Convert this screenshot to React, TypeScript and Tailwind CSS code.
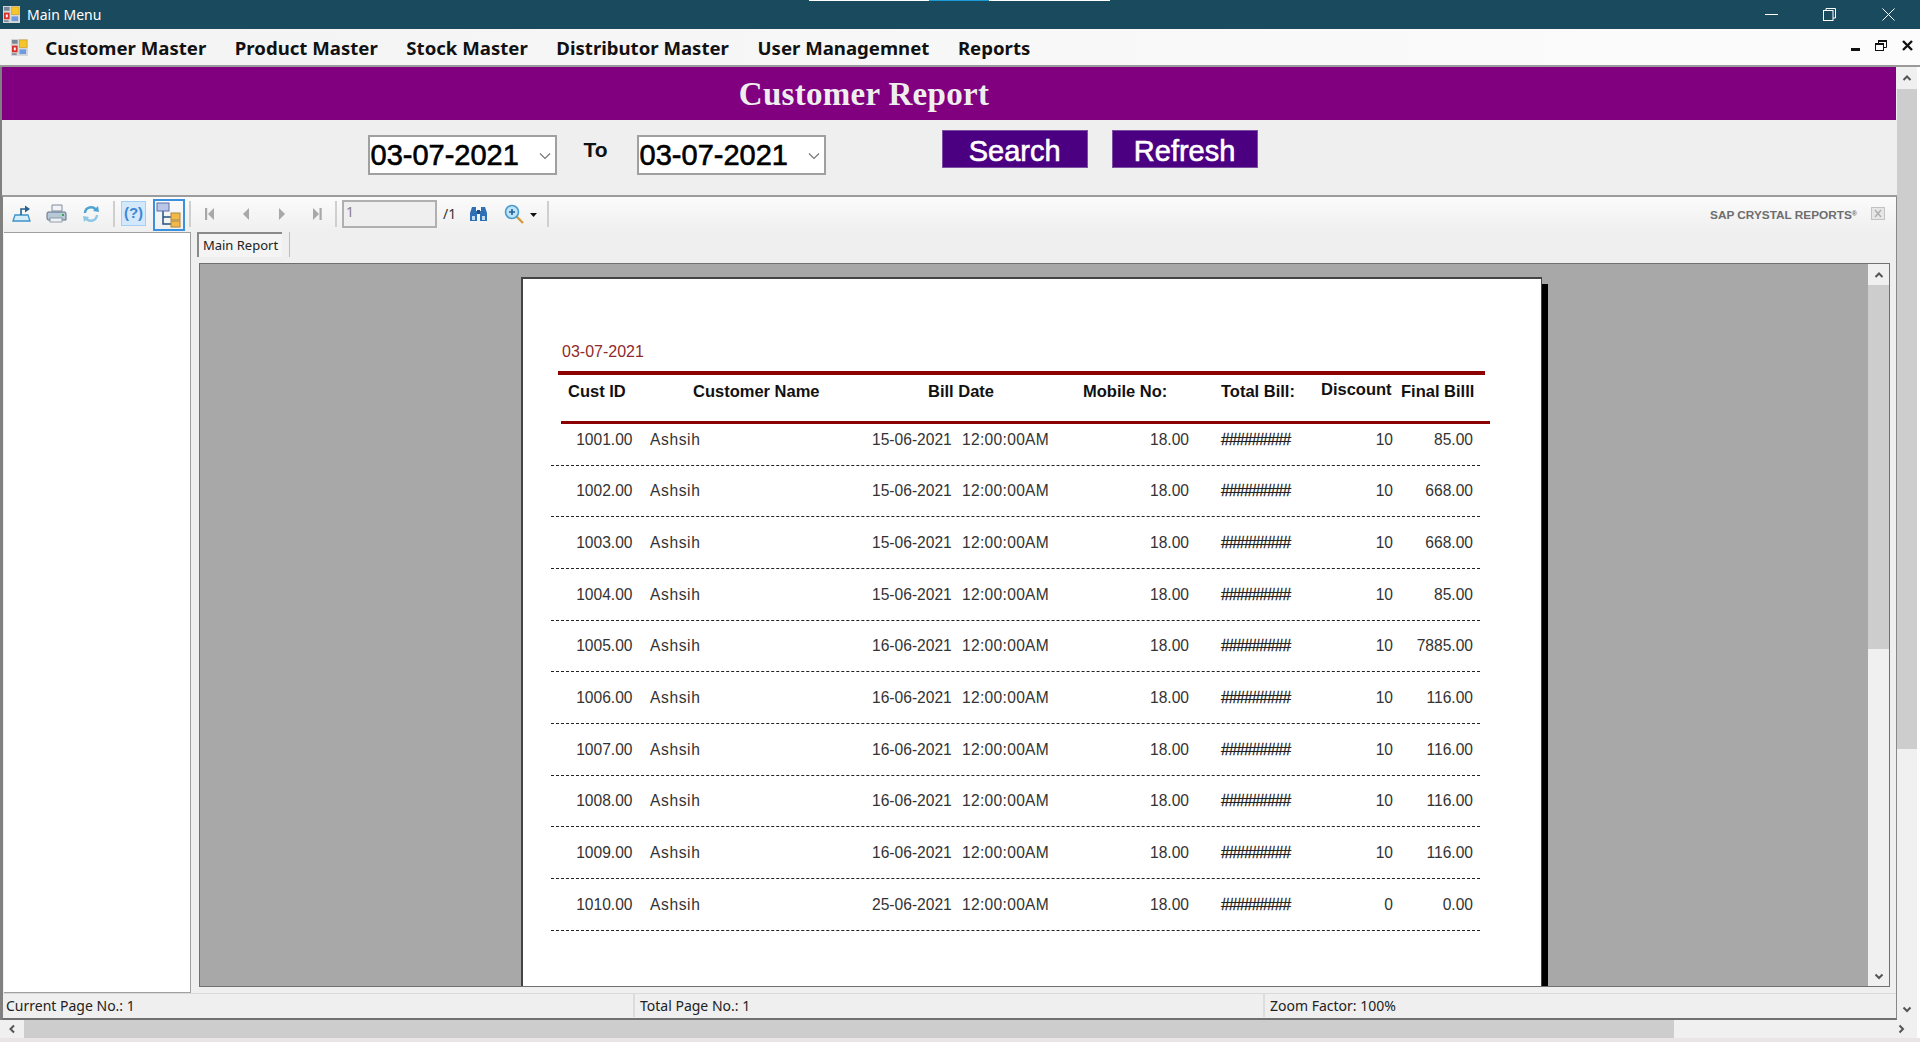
const rows = [
  { id: '1001.00', date: '15-06-2021', discount: '10', final: '85.00' },
  { id: '1002.00', date: '15-06-2021', discount: '10', final: '668.00' },
  { id: '1003.00', date: '15-06-2021', discount: '10', final: '668.00' },
  { id: '1004.00', date: '15-06-2021', discount: '10', final: '85.00' },
  { id: '1005.00', date: '16-06-2021', discount: '10', final: '7885.00' },
  { id: '1006.00', date: '16-06-2021', discount: '10', final: '116.00' },
  { id: '1007.00', date: '16-06-2021', discount: '10', final: '116.00' },
  { id: '1008.00', date: '16-06-2021', discount: '10', final: '116.00' },
  { id: '1009.00', date: '16-06-2021', discount: '10', final: '116.00' },
  { id: '1010.00', date: '25-06-2021', discount: '0', final: '0.00' },
]

const menus = ['Customer Master', 'Product Master', 'Stock Master', 'Distributor Master', 'User Managemnet', 'Reports']

function AppIcon({ size }: { size: number }) {
  return (
    <svg width={size} height={size} viewBox="0 0 18 18" className="shrink-0">
      <rect x="0" y="0" width="18" height="18" fill="#d8d8d8" />
      <rect x="1" y="1" width="6" height="4" fill="#7a8794" />
      <rect x="9" y="1" width="8" height="8" fill="#f5c52c" stroke="#c99a17" strokeWidth="0.6" />
      <rect x="1" y="7" width="6" height="7" fill="#d8312a" />
      <rect x="3" y="9" width="2" height="3" fill="#fff" />
      <rect x="9" y="11" width="7" height="5" fill="#6d9ae0" />
      <rect x="1" y="15" width="5" height="2" fill="#8794a0" />
    </svg>
  )
}

function Chevron({ dir, className }: { dir: 'up' | 'down' | 'left' | 'right'; className?: string }) {
  const d = {
    up: 'M1.5 7 L5 3.5 L8.5 7',
    down: 'M1.5 3.5 L5 7 L8.5 3.5',
    left: 'M7 1.5 L3.5 5 L7 8.5',
    right: 'M3.5 1.5 L7 5 L3.5 8.5',
  }[dir]
  return (
    <svg width="10" height="10" viewBox="0 0 10 10" className={className}>
      <path d={d} fill="none" stroke="#555" strokeWidth="2" />
    </svg>
  )
}

function DatePicker({ value }: { value: string }) {
  return (
    <div className="w-[189px] h-[40px] bg-white border-2 border-[#a0a0a0] flex items-center pl-[1px] font-['Liberation_Sans',sans-serif] text-[29px] text-black">
      <span className="mt-[1px] [-webkit-text-stroke:0.6px_black]">{value}</span>
      <svg width="12" height="8" viewBox="0 0 12 8" className="ml-[20px] mt-[2px]">
        <path d="M1 1.5 L6 6.5 L11 1.5" fill="none" stroke="#777" strokeWidth="1.2" />
      </svg>
    </div>
  )
}

function NavTriangle({ dir, bar }: { dir: 'left' | 'right'; bar?: boolean }) {
  const tri = dir === 'left' ? 'M9 2 L3 8 L9 14 Z' : 'M3 2 L9 8 L3 14 Z'
  return (
    <svg width="12" height="16" viewBox="0 0 12 16">
      {bar && <rect x={dir === 'left' ? 0 : 9.5} y="2" width="2.2" height="12" fill="#a8a8a8" />}
      <path d={tri} fill="#a8a8a8" />
    </svg>
  )
}

function Sep({ className }: { className: string }) {
  return <div className={`w-[2px] h-[26px] bg-[#cfcfcf] ${className}`} />
}

function Toolbar() {
  return (
    <div className="h-[35px] shrink-0 flex items-center pb-[2px] bg-gradient-to-b from-[#fbfbfb] to-[#efefef] font-['Noto_Sans',sans-serif]">
      {/* export */}
      <svg width="21" height="19" viewBox="0 0 21 19" className="ml-[8px]">
        <path d="M2 17 L4 11 H17 L19 17 Z" fill="#d6eefc" stroke="#3d93c9" strokeWidth="1.3" />
        <path d="M10 11 V5 H15" fill="none" stroke="#26618f" strokeWidth="1.6" />
        <path d="M14 1.5 L19 5 L14 8.5 Z" fill="#26618f" />
      </svg>
      {/* print */}
      <svg width="21" height="19" viewBox="0 0 21 19" className="ml-[14px]">
        <path d="M6 1 H16 V7 H6 Z" fill="#f1f3f6" stroke="#7e8c9c" />
        <path d="M2 8 H19 Q20 8 20 10 V16 H2 Q1 16 1 14 V10 Q1 8 2 8 Z" fill="#b7c8d8" stroke="#5b7186" />
        <rect x="4" y="14" width="12" height="4" fill="#eef2f6" stroke="#7e8c9c" strokeWidth="0.8" />
        <rect x="16" y="10" width="2" height="2" fill="#3aa655" />
      </svg>
      {/* refresh */}
      <svg width="18" height="18" viewBox="0 0 18 18" className="ml-[15px]">
        <path d="M3 8 A6 6 0 0 1 14 5" fill="none" stroke="#4ea5d4" strokeWidth="2.4" />
        <path d="M15 10 A6 6 0 0 1 4 13" fill="none" stroke="#8cc7e6" strokeWidth="2.4" />
        <path d="M11 6 L17 7 L16 1 Z" fill="#4ea5d4" />
        <path d="M7 12 L1 11 L2 17 Z" fill="#8cc7e6" />
      </svg>
      <Sep className="ml-[13px]" />
      <div className="ml-[6px] w-[25px] h-[25px] bg-[#d3e9fb] border border-[#a5cff2] flex items-center justify-center font-['Liberation_Sans',sans-serif] font-bold text-[15px] text-[#3f86d6]">
        (?)
      </div>
      <div className="ml-[7px] w-[32px] h-[32px] mt-[2px] border-2 border-[#3a90dc] flex items-center justify-center">
        <svg width="26" height="26" viewBox="0 0 26 26">
          <path d="M7 9 V22 H15 M7 15 H15" fill="none" stroke="#26507f" strokeWidth="1.5" />
          <rect x="1" y="1" width="12" height="8" fill="#b9c6e8" stroke="#5d6fa5" />
          <rect x="15" y="11" width="9" height="7" fill="#f4b84a" stroke="#a9883c" />
          <rect x="15" y="19" width="9" height="6" fill="#f4b84a" stroke="#a9883c" />
        </svg>
      </div>
      <Sep className="ml-[4px]" />
      <div className="ml-[14px]"><NavTriangle dir="left" bar /></div>
      <div className="ml-[23px]"><NavTriangle dir="left" /></div>
      <div className="ml-[24px]"><NavTriangle dir="right" /></div>
      <div className="ml-[22px]"><NavTriangle dir="right" bar /></div>
      <Sep className="ml-[13px]" />
      <div className="ml-[5px] w-[95px] h-[28px] bg-[#efefef] border-2 border-[#b0b0b0] pl-[2px] text-[14px] leading-[20px] text-[#8a7d8a]">1</div>
      <span className="ml-[6px] w-[14px] text-[14px] text-[#333]">/1</span>
      {/* binoculars */}
      <svg width="19" height="17" viewBox="0 0 19 17" className="ml-[12px]">
        <path d="M3 2 H7 V6 H8 V16 H1 V8 Z M12 2 H16 L18 8 V16 H11 V6 H12 Z" fill="#2f6fb5" />
        <rect x="8" y="5" width="3" height="4" fill="#1f4f86" />
        <rect x="3" y="11" width="3" height="4" fill="#bcdcf5" />
        <rect x="13" y="11" width="3" height="4" fill="#bcdcf5" />
      </svg>
      {/* zoom */}
      <svg width="21" height="20" viewBox="0 0 21 20" className="ml-[16px]">
        <path d="M12 12 L19 19" stroke="#d49a3a" strokeWidth="2.4" />
        <circle cx="8" cy="8" r="6.5" fill="#bfe3f7" stroke="#4a9bd0" strokeWidth="1.6" />
        <path d="M5 8 H11 M8 5 V11" stroke="#1f5f99" strokeWidth="1.6" />
      </svg>
      <svg width="7" height="4" viewBox="0 0 7 4" className="ml-[5px] mt-[3px]">
        <path d="M0 0 H7 L3.5 4 Z" fill="#111" />
      </svg>
      <Sep className="ml-[10px]" />
      <span className="ml-auto font-['Liberation_Sans',sans-serif] font-bold text-[11.8px] text-[#6d6d6d] mt-[5px]">
        SAP CRYSTAL REPORTS<sup className="text-[7px]">®</sup>
      </span>
      <svg width="14" height="13" viewBox="0 0 14 13" className="ml-[14px] mr-[11px] -mt-[1px]">
        <rect x="0.5" y="0.5" width="13" height="12" fill="#e6e6e6" stroke="#c2c2c2" />
        <path d="M4 3 L10 10 M10 3 L4 10" stroke="#aaa" strokeWidth="1.2" />
      </svg>
    </div>
  )
}

function ReportPage() {
  return (
    <div className="w-[1021px] h-[800px] shrink-0 bg-white border-l-2 border-t-2 border-r border-[#444] font-['Liberation_Sans',sans-serif] text-[15.6px] flex flex-col">
      <div className="ml-[39px] mt-[64px] h-[28px] text-[16px] leading-[18px] text-[#8f2a2a]">03-07-2021</div>
      <div className="ml-[35px] w-[927px] h-[4px] bg-[#8b0000]" />
      <div className="ml-[45px] h-[46px] pt-[7px] grid grid-cols-[125px_235px_155px_138px_100px_80px_auto] items-start font-bold text-[16.5px] leading-[18px] text-[#111]">
        <span>Cust ID</span>
        <span>Customer Name</span>
        <span>Bill Date</span>
        <span>Mobile No:</span>
        <span>Total Bill:</span>
        <span className="-translate-y-[2px]">Discount</span>
        <span>Final Billl</span>
      </div>
      <div className="ml-[38px] w-[929px] h-[3px] bg-[#8b0000]" />
      <div className="ml-[28px] w-[929px] flex flex-col text-[#333]">
        {rows.map((r, i) => (
          <div
            key={r.id}
            className={`grid grid-cols-[81.5px_239.5px_90px_86px_141px_106px_98px_80px] items-end pb-[16px] leading-[18px] border-b border-dashed border-[#222] ${i === 0 ? 'h-[41.5px]' : 'h-[51.7px]'}`}
          >
            <span className="text-right">{r.id}</span>
            <span className="pl-[17.5px] tracking-[0.6px]">Ashsih</span>
            <span>{r.date}</span>
            <span className="tracking-[0.3px]">12:00:00AM</span>
            <span className="text-right">18.00</span>
            <span className="pl-[32px] tracking-[-1px] text-[#222] [-webkit-text-stroke:0.3px_#222]">#########</span>
            <span className="text-right">{r.discount}</span>
            <span className="text-right">{r.final}</span>
          </div>
        ))}
      </div>
    </div>
  )
}

export default function App() {
  return (
    <div className="w-[1920px] h-[1042px] overflow-hidden flex flex-col bg-white relative font-['Noto_Sans',sans-serif]">
      {/* title bar */}
      <div className="h-[29px] shrink-0 bg-[#1a4a5e] flex items-center text-white">
        <div className="ml-[3px]"><AppIcon size={17} /></div>
        <span className="ml-[7px] text-[14px]">Main Menu</span>
        <svg width="13" height="13" viewBox="0 0 13 13" className="ml-auto">
          <path d="M0 6.5 H13" stroke="#fff" strokeWidth="1" />
        </svg>
        <svg width="13" height="13" viewBox="0 0 13 13" className="ml-[45px]">
          <rect x="0.5" y="2.5" width="9.5" height="10" fill="none" stroke="#fff" />
          <path d="M3 2.5 V0.5 H12.5 V10 H10" fill="none" stroke="#fff" />
        </svg>
        <svg width="13" height="13" viewBox="0 0 13 13" className="ml-[46px] mr-[25px]">
          <path d="M0.5 0.5 L12.5 12.5 M12.5 0.5 L0.5 12.5" stroke="#fff" strokeWidth="1" />
        </svg>
      </div>
      <div className="absolute left-[809px] top-0 w-[301px] h-[1px] bg-white" />
      <div className="absolute left-[929px] top-0 w-[60px] h-[1px] bg-[#1a9ad6]" />

      {/* menu strip */}
      <div className="h-[36px] shrink-0 bg-gradient-to-r from-[#f3f3f3] to-[#fcfcfc] flex items-center">
        <div className="ml-[11px]"><AppIcon size={17} /></div>
        <div className="ml-[3px] mt-[2px] flex items-center font-bold text-[18.6px] text-[#111]">
          {menus.map((m) => (
            <span key={m} className="px-[14.3px]">{m}</span>
          ))}
        </div>
        <svg width="9" height="4" viewBox="0 0 9 4" className="ml-auto mt-[6px]">
          <rect width="9" height="3" fill="#111" />
        </svg>
        <svg width="12" height="11" viewBox="0 0 12 11" className="ml-[15px] -mt-[3px]">
          <rect x="0.5" y="3.5" width="8" height="7" fill="none" stroke="#111" />
          <rect x="0" y="3" width="9" height="2" fill="#111" />
          <path d="M3.5 3 V0.5 H11.5 V7.5 H9" fill="none" stroke="#111" />
          <rect x="3" y="0" width="9" height="2" fill="#111" />
        </svg>
        <svg width="11" height="11" viewBox="0 0 11 11" className="ml-[15px] mr-[7px] -mt-[3px]">
          <path d="M1 1 L10 10 M10 1 L1 10" stroke="#111" strokeWidth="2.4" />
        </svg>
      </div>

      {/* mdi area */}
      <div className="flex-1 min-h-0 flex border-t-2 border-[#9a9a9a]">
        <div className="w-[1897px] shrink-0 flex flex-col border-l-2 border-[#808080] bg-[#efefef]">
          <div className="h-[53px] shrink-0 mr-[1px] bg-[#800080] flex items-center justify-center pr-[170px] pt-[2px] font-['Liberation_Serif',serif] font-bold text-[33px] tracking-[0.3px] text-[#eee]">
            Customer Report
          </div>

          <div className="h-[77px] shrink-0 border-b-2 border-[#9c9c9c] flex items-start pl-[365.5px]">
            <div className="mt-[15px]"><DatePicker value="03-07-2021" /></div>
            <span className="ml-[27px] mt-[18px] font-['Liberation_Sans',sans-serif] font-bold text-[21px] leading-[24px] text-[#111]">To</span>
            <div className="ml-[29px] mt-[15px]"><DatePicker value="03-07-2021" /></div>
            <button className="ml-[116px] mt-[10px] w-[146px] h-[38px] pt-[4px] bg-[#4b0082] border border-[#7d4fa3] font-['Liberation_Sans',sans-serif] text-[29px] leading-[33px] text-white [-webkit-text-stroke:0.6px_white]">Search</button>
            <button className="ml-[24px] mt-[10px] w-[146px] h-[38px] pt-[4px] bg-[#4b0082] border border-[#7d4fa3] font-['Liberation_Sans',sans-serif] text-[29px] leading-[33px] text-white [-webkit-text-stroke:0.6px_white]">Refresh</button>
          </div>

          <div className="flex-1 min-h-0 flex flex-col border-l border-r border-b-2 border-r-[#888] border-l-[#808080] border-b-[#707070]">
            <Toolbar />
            <div className="flex-1 min-h-0 flex">
              <div className="w-[187px] shrink-0 ml-[1px] bg-white border-t border-r border-b border-[#a0a0a0]" />
              <div className="flex-1 min-w-0 flex flex-col pl-[8px] pr-[6px] pb-[6px]">
                <div className="h-[31px] shrink-0 flex items-start text-[13px] text-[#222]">
                  <div className="-ml-[2px] w-[85px] h-[25px] border-t-2 border-l-2 border-[#8a8a8a] bg-[#f4f4f4] flex items-center justify-center">Main Report</div>
                  <div className="ml-[7px] w-[1px] h-[25px] bg-[#bdbdbd]" />
                </div>
                <div className="flex-1 min-h-0 flex border-t border-l border-r border-b border-[#707070] bg-[#a8a8a8]">
                  <div className="flex-1 min-w-0 overflow-hidden flex items-start pl-[321px] pt-[13px]">
                    <ReportPage />
                    <div className="w-[6px] h-[800px] mt-[7px] bg-black shrink-0" />
                  </div>
                  <div className="w-[21px] shrink-0 flex flex-col bg-[#f0f0f0]">
                    <div className="h-[21px] flex items-center justify-center"><Chevron dir="up" /></div>
                    <div className="h-[364px] bg-[#cdcdcd]" />
                    <div className="mt-auto h-[21px] flex items-center justify-center"><Chevron dir="down" /></div>
                  </div>
                </div>
              </div>
            </div>
            <div className="h-[25px] shrink-0 flex items-center pb-[1px] text-[14px] text-[#222] border-t border-[#dadada]">
              <span className="pl-[3px] w-[630px]">Current Page No.: 1</span>
              <span className="pl-[5px] w-[630px] h-full flex items-center border-l-2 border-[#dcdcdc]">Total Page No.: 1</span>
              <span className="pl-[5px] flex-1 h-full flex items-center border-l-2 border-[#dcdcdc]">Zoom Factor: 100%</span>
            </div>
          </div>
        </div>

        {/* outer vertical scrollbar */}
        <div className="w-[20px] shrink-0 flex flex-col bg-[#f0f0f0]">
          <div className="h-[22px] flex items-center justify-center"><Chevron dir="up" /></div>
          <div className="h-[660px] bg-[#cdcdcd]" />
          <div className="mt-auto h-[22px] flex items-center justify-center"><Chevron dir="down" /></div>
        </div>
      </div>

      {/* outer horizontal scrollbar */}
      <div className="h-[18px] shrink-0 mr-[3px] flex items-center bg-[#f0f0f0]">
        <div className="w-[24px] flex justify-center"><Chevron dir="left" /></div>
        <div className="w-[1650px] h-full bg-[#cdcdcd]" />
        <div className="ml-auto w-[32px] flex justify-center"><Chevron dir="right" /></div>
      </div>
      <div className="h-[4px] shrink-0 bg-[#e8e4e8]" />
    </div>
  )
}
